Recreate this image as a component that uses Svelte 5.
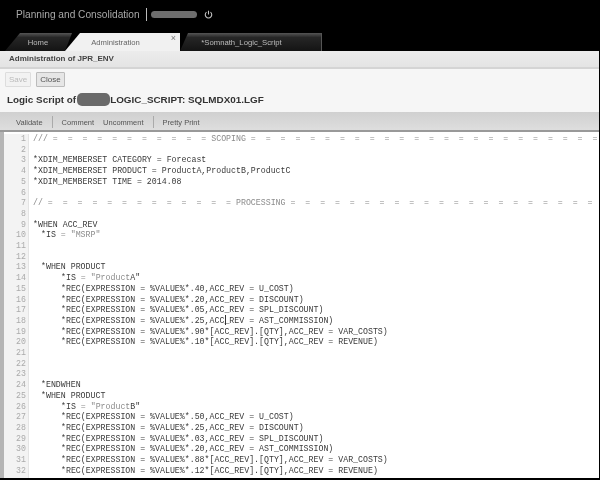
<script>
  const eq = (n) => '=  '.repeat(n).trimEnd();

  // indent: 0 none, 1 WHEN level, 2 body of a WHEN
  const lines = [
    { text: '/// ' + eq(10) + '  = SCOPING ' + eq(24), comment: true },
    { text: '' },
    { text: '*XDIM_MEMBERSET CATEGORY = Forecast' },
    { text: '*XDIM_MEMBERSET PRODUCT = ProductA,ProductB,ProductC' },
    { text: '*XDIM_MEMBERSET TIME = 2014.08' },
    { text: '' },
    { text: '// ' + eq(12) + '  = PROCESSING ' + eq(21), comment: true },
    { text: '' },
    { text: '*WHEN ACC_REV' },
    { text: '*IS', str: ' = "MSRP"', indent: 1 },
    { text: '' },
    { text: '' },
    { text: '*WHEN PRODUCT', indent: 1 },
    { text: '*IS', str: ' = "Product', tail: 'A"', indent: 2 },
    { text: '*REC(EXPRESSION = %VALUE%*.40,ACC_REV = U_COST)', indent: 2 },
    { text: '*REC(EXPRESSION = %VALUE%*.20,ACC_REV = DISCOUNT)', indent: 2 },
    { text: '*REC(EXPRESSION = %VALUE%*.05,ACC_REV = SPL_DISCOUNT)', indent: 2 },
    { text: '*REC(EXPRESSION = %VALUE%*.25,ACC_REV = AST_COMMISSION)', indent: 2 },
    { text: '*REC(EXPRESSION = %VALUE%*.90*[ACC_REV].[QTY],ACC_REV = VAR_COSTS)', indent: 2 },
    { text: '*REC(EXPRESSION = %VALUE%*.10*[ACC_REV].[QTY],ACC_REV = REVENUE)', indent: 2 },
    { text: '' },
    { text: '' },
    { text: '' },
    { text: '*ENDWHEN', indent: 1 },
    { text: '*WHEN PRODUCT', indent: 1 },
    { text: '*IS', str: ' = "Product', tail: 'B"', indent: 2 },
    { text: '*REC(EXPRESSION = %VALUE%*.50,ACC_REV = U_COST)', indent: 2 },
    { text: '*REC(EXPRESSION = %VALUE%*.25,ACC_REV = DISCOUNT)', indent: 2 },
    { text: '*REC(EXPRESSION = %VALUE%*.03,ACC_REV = SPL_DISCOUNT)', indent: 2 },
    { text: '*REC(EXPRESSION = %VALUE%*.20,ACC_REV = AST_COMMISSION)', indent: 2 },
    { text: '*REC(EXPRESSION = %VALUE%*.88*[ACC_REV].[QTY],ACC_REV = VAR_COSTS)', indent: 2 },
    { text: '*REC(EXPRESSION = %VALUE%*.12*[ACC_REV].[QTY],ACC_REV = REVENUE)', indent: 2 },
  ];
</script>

<div class="page">
  <header class="top">
    <div class="brand">
      <span class="product">Planning and Consolidation</span>
      <span class="sep"></span>
      <span class="user"></span>
      <svg class="power" viewBox="0 0 10 10" width="9" height="9">
        <path d="M2.8 2.4a3.6 3.6 0 1 0 4.4 0" fill="none" stroke="#c4c4c4" stroke-width="1.2" />
        <path d="M5 .8v4.2" stroke="#c4c4c4" stroke-width="1.2" />
      </svg>
    </div>
    <nav class="tabs">
      <div class="tab home">Home</div>
      <div class="tab admin">Administration<span class="x">×</span></div>
      <div class="tab script">*Somnath_Logic_Script</div>
    </nav>
  </header>

  <div class="crumb">Administration of JPR_ENV</div>

  <div class="actions">
    <div class="buttons">
      <button class="disabled">Save</button>
      <button>Close</button>
    </div>
    <h1>Logic Script of<span class="redact"></span>LOGIC_SCRIPT: SQLMDX01.LGF</h1>
  </div>

  <div class="toolbar">
    <span>Validate</span>
    <i></i>
    <span>Comment</span>
    <span>Uncomment</span>
    <i></i>
    <span>Pretty Print</span>
  </div>

  <div class="editor">
    <div class="gutter">
      {#each lines as _, i}
        <div>{i + 1}</div>
      {/each}
    </div>
    <div class="code">
      {#each lines as line}
        <div class="line i{line.indent || 0}" class:comment={line.comment}>{line.text || ' '}{#if line.str}<span class="str">{line.str}</span>{/if}{#if line.tail}{line.tail}{/if}</div>
      {/each}
      <span class="ibeam"></span>
    </div>
  </div>
</div>

<style>
  :global(body) {
    margin: 0;
    background: #000;
  }

  .page {
    width: 600px;
    height: 480px;
    display: flex;
    flex-direction: column;
    overflow: hidden;
    box-sizing: border-box;
    border-right: 1px solid #000;
    border-bottom: 2px solid #000;
    font-family: "Liberation Sans", Arial, sans-serif;
    filter: blur(0.4px);
  }

  .top {
    height: 51px;
    flex: none;
    background: #000;
    display: flex;
    flex-direction: column;
    justify-content: space-between;
  }

  .brand {
    display: flex;
    align-items: center;
    padding: 8px 0 0 16px;
    color: #a8a8a8;
    font-size: 10.17px;
  }

  .sep {
    width: 1px;
    height: 13px;
    background: #bbb;
    margin: 0 4px 0 6px;
  }

  .user {
    width: 46px;
    height: 7px;
    border-radius: 4px;
    background: #6e6e6e;
    margin-right: 7px;
  }

  .tabs {
    display: flex;
    padding-left: 5px;
    height: 18px;
  }

  .tab {
    display: flex;
    align-items: center;
    justify-content: center;
    font-size: 7.7px;
    color: #bbb;
    background: linear-gradient(#555, #262626 25%, #141414);
  }

  .home {
    width: 68px;
    padding-right: 2px;
    box-sizing: border-box;
    clip-path: polygon(15px 0, 67px 0, 60px 100%, 0 100%);
  }

  .admin {
    position: relative;
    width: 115px;
    margin-left: -8px;
    padding-right: 14px;
    box-sizing: border-box;
    color: #666;
    background: #f1f1f1;
    clip-path: polygon(15px 0, 100% 0, 100% 100%, 0 100%);
  }

  .x {
    position: absolute;
    top: 0;
    right: 4px;
    font-size: 9px;
    color: #777;
  }

  .script {
    width: 142px;
    padding-right: 18px;
    box-sizing: border-box;
    border-right: 1px solid #555;
    clip-path: polygon(8px 0, 100% 0, 100% 100%, 0 100%);
  }

  .crumb {
    height: 18px;
    flex: none;
    box-sizing: border-box;
    border-bottom: 2px solid #d4d4d4;
    background: linear-gradient(#ececec, #e4e4e4);
    padding-left: 9px;
    font-size: 8px;
    font-weight: bold;
    line-height: 16px;
    color: #444;
  }

  .actions {
    height: 43px;
    flex: none;
    box-sizing: border-box;
    padding: 3px 0 0 5px;
    background: #f6f6f6;
  }

  .buttons {
    display: flex;
    gap: 5px;
  }

  button {
    height: 15px;
    padding: 0 3px;
    border: 1px solid #bbb;
    border-radius: 1px;
    background: #e6e6e6;
    font: 8px "Liberation Sans", Arial, sans-serif;
    color: #555;
  }

  button.disabled {
    color: #bbb;
    background: #f2f2f2;
    border-color: #ddd;
  }

  h1 {
    display: flex;
    align-items: center;
    height: 13px;
    margin: 6px 0 0 2px;
    font-size: 9.9px;
    font-weight: bold;
    color: #333;
  }

  .redact {
    width: 33px;
    height: 13px;
    margin-left: 1px;
    border-radius: 5px;
    background: #6a6a6a;
  }

  .toolbar {
    height: 20px;
    flex: none;
    box-sizing: border-box;
    display: flex;
    align-items: center;
    gap: 9px;
    padding: 2px 0 0 16px;
    background: linear-gradient(#d0d0d0, #dedede);
    border-bottom: 2px solid #999;
    font-size: 7.5px;
    color: #555;
  }

  .toolbar i {
    width: 1px;
    height: 12px;
    background: #aaa;
  }

  .editor {
    flex: 1;
    min-height: 0;
    display: flex;
    background: #fff;
    border-left: 4px solid #b5b5b5;
    overflow: hidden;
    padding-top: 2px;
    font-family: "Liberation Mono", "Courier New", monospace;
    font-size: 8.25px;
    line-height: 10.7px;
  }

  .gutter {
    width: 25px;
    flex: none;
    box-sizing: border-box;
    padding-right: 2px;
    text-align: right;
    color: #aaa;
    background: #f3f3f3;
    border-right: 1px solid #e4e4e4;
  }

  .code {
    position: relative;
    flex: 1;
    min-width: 0;
    padding-left: 4px;
    color: #3a3a3a;
    white-space: pre;
  }

  .i1 {
    padding-left: 8px;
  }

  .i2 {
    padding-left: 28px;
  }

  .comment,
  .str {
    color: #8c8c8c;
  }

  /* mouse cursor caught in the shot, over line 18 */
  .ibeam {
    position: absolute;
    left: 196px;
    top: 181px;
    width: 1px;
    height: 10px;
    background: #333;
  }
</style>
